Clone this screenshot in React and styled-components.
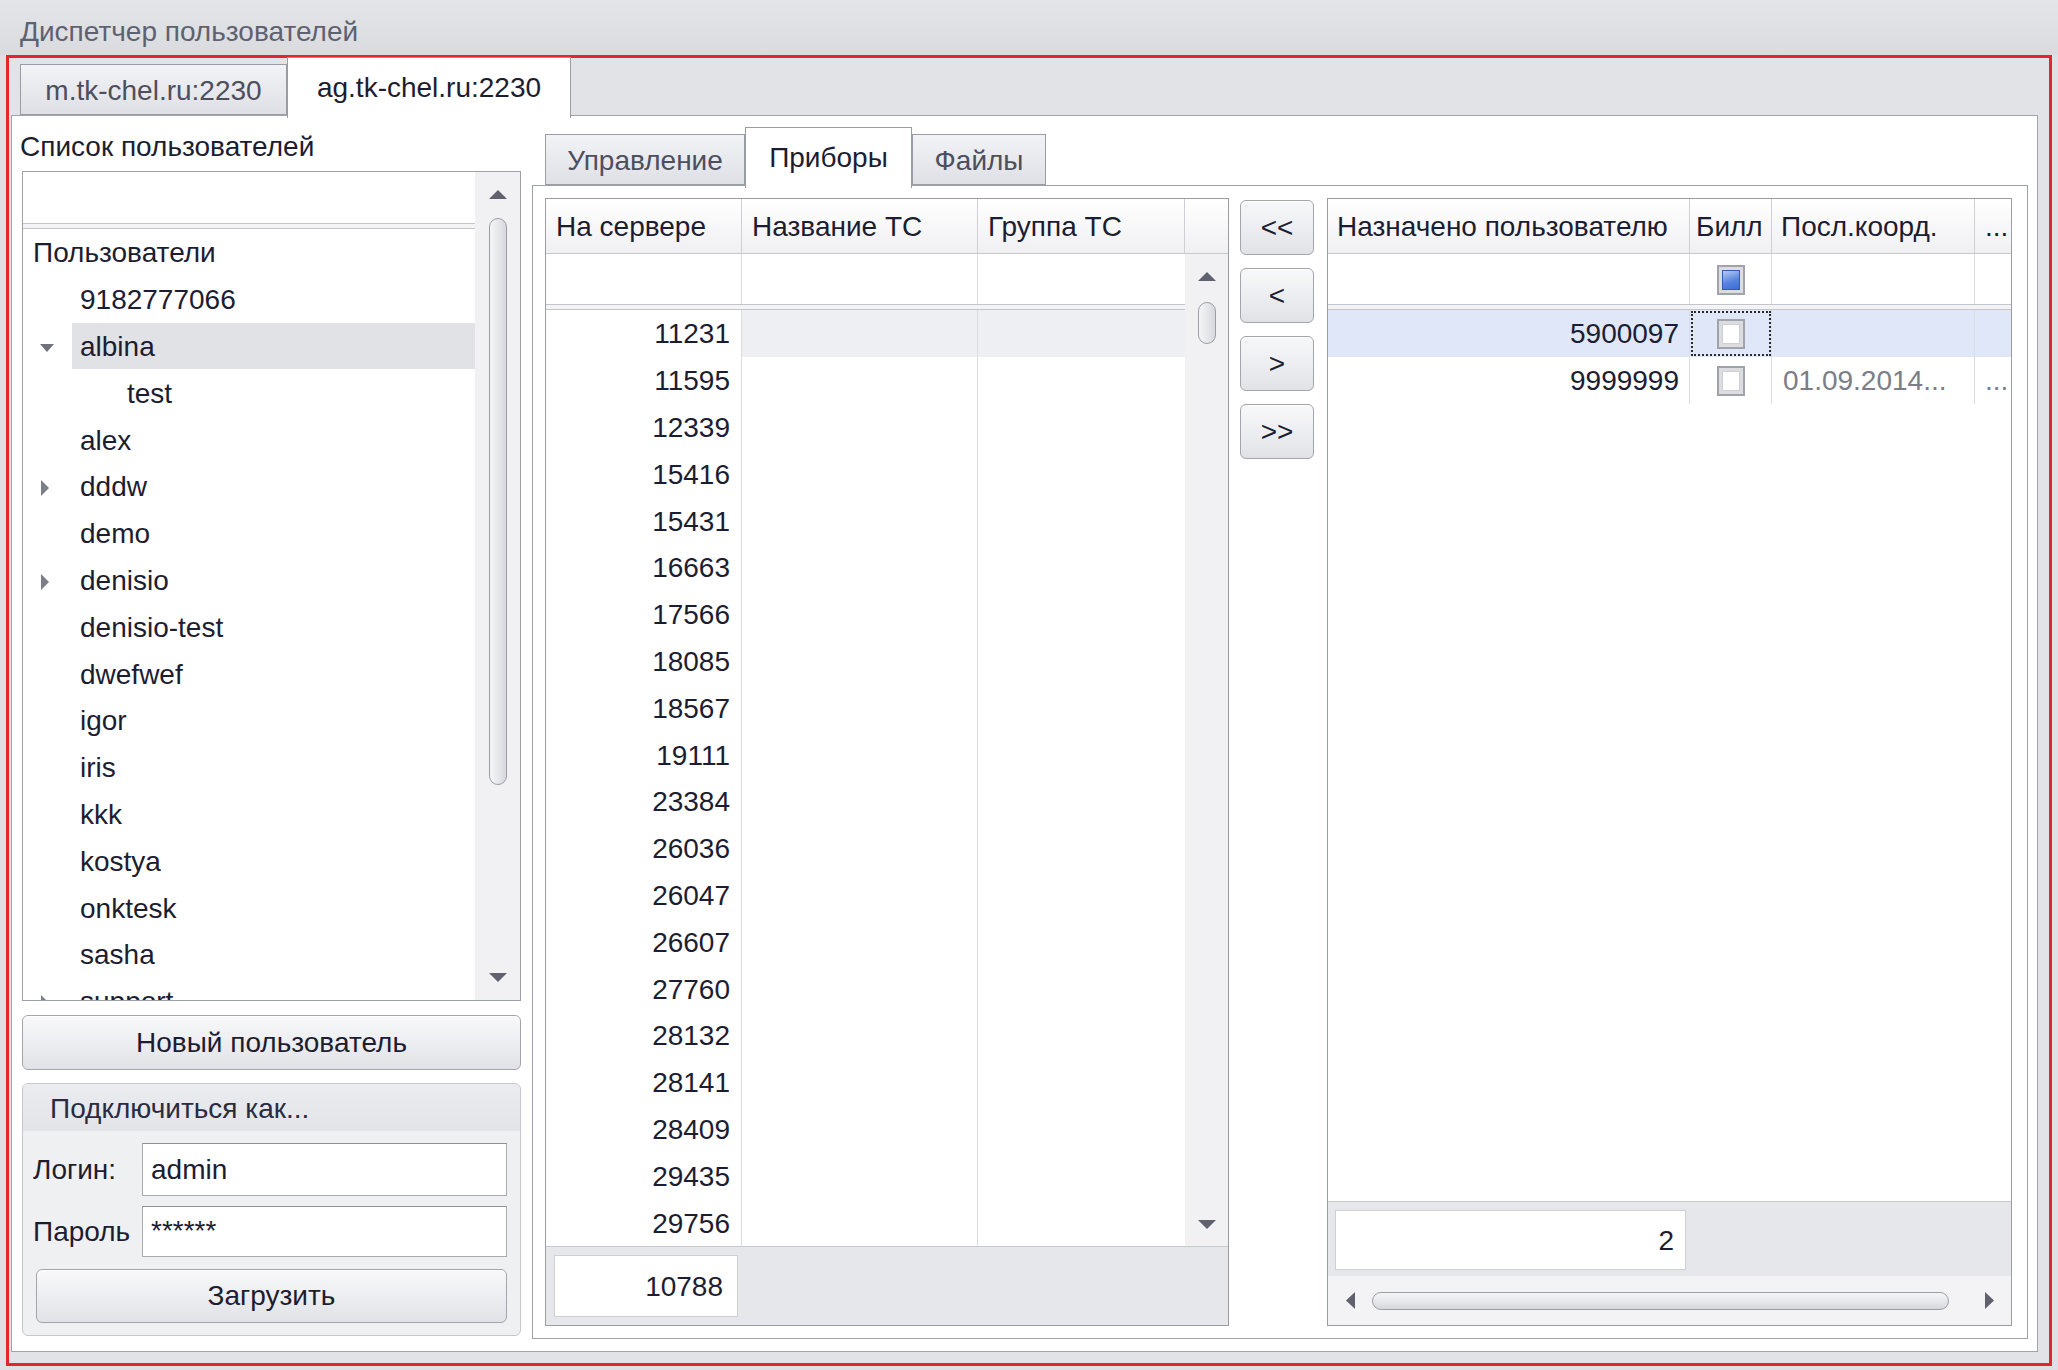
import React from 'react'
import styled, { createGlobalStyle } from 'styled-components'

const FONT = `"Liberation Sans", Arial, sans-serif`
const INK = '#1d1d31'
const ROW = 46.8

const GlobalStyle = createGlobalStyle`
  html, body { margin: 0; padding: 0; }
  body { background: #dfe0e4; font-family: ${FONT}; font-size: 28px; color: ${INK}; }
  * { box-sizing: border-box; }
`

const Window = styled.div`
  width: 2058px;
  height: 1370px;
  display: flex;
  flex-direction: column;
  background: #dfe0e4;
  overflow: hidden;
`

const TitleBar = styled.div`
  height: 55px;
  flex: none;
  display: flex;
  align-items: center;
  padding: 8px 0 0 20px;
  color: #5e6170;
  background: linear-gradient(#e4e5e8, #dadbdf);
`

const Frame = styled.div`
  flex: 1;
  min-height: 0;
  margin: 0 6px 4px 6px;
  border: 3px solid #e3262b;
  display: flex;
  flex-direction: column;
  background: #e2e3e7;
`

const TabStrip = styled.div`
  flex: none;
  height: ${p => p.$h}px;
  display: flex;
  align-items: flex-end;
  padding-left: ${p => p.$pad}px;
  position: relative;
  z-index: 1;
`

const Tab = styled.div`
  width: ${p => p.$w}px;
  height: ${p => (p.$active ? p.$h + 10 : p.$h)}px;
  margin-bottom: ${p => (p.$active ? -3 : 0)}px;
  display: flex;
  align-items: center;
  justify-content: center;
  padding-top: ${p => (p.$active ? 0 : 3)}px;
  border: 1px solid #9a9ca5;
  border-bottom: ${p => (p.$active ? 'none' : '1px solid #9a9ca5')};
  background: ${p => (p.$active ? '#ffffff' : 'linear-gradient(#f2f3f6, #dfe0e5)')};
  color: ${p => (p.$active ? INK : '#4d4f5e')};
  white-space: nowrap;
`

const OuterPanel = styled.div`
  flex: 1;
  min-height: 0;
  margin: 0 11px 11px 2px;
  border: 1px solid #a2a4ab;
  background: #fff;
  display: flex;
  gap: 11px;
  padding: 11px 9px 12px 10px;
`

const LeftColumn = styled.div`
  width: 499px;
  flex: none;
  display: flex;
  flex-direction: column;
`

const Caption = styled.div`
  height: 44px;
  line-height: 40px;
  margin-left: -2px;
  white-space: nowrap;
`

/* ---------- tree ---------- */

const TreeBox = styled.div`
  height: 830px;
  flex: none;
  border: 1px solid #9fa1a8;
  display: flex;
  overflow: hidden;
`

const TreeMain = styled.div`
  flex: 1;
  min-width: 0;
  display: flex;
  flex-direction: column;
  overflow: hidden;
`

const BlankHead = styled.div`
  height: ${p => p.$h}px;
  flex: none;
  background: #fff;
`

const DoubleLine = styled.div`
  height: 6px;
  flex: none;
  border-top: 1px solid #c3c5cb;
  border-bottom: 1px solid #c3c5cb;
  background: #f4f4f6;
`

const TreeRow = styled.div`
  height: ${ROW}px;
  flex: none;
  display: flex;
  align-items: center;
  padding-left: 10px;
`

const Indent = styled.div`
  width: ${p => p.$w}px;
  flex: none;
  height: 100%;
  display: flex;
  align-items: center;
  padding: 4px 0 0 7px;
`

const TreeLabel = styled.div`
  flex: 1;
  height: 100%;
  display: flex;
  align-items: center;
  padding: 2px 0 0 8px;
  margin-left: -8px;
  white-space: nowrap;
  background: ${p => (p.$selected ? '#e1e2e5' : 'transparent')};
`

/* ---------- scrollbars ---------- */

const VScroll = styled.div`
  width: ${p => p.$w}px;
  flex: none;
  display: flex;
  flex-direction: column;
  align-items: center;
  background: #f1f1f4;
`

const ArrowBox = styled.div`
  height: ${p => p.$h}px;
  width: ${p => p.$w || 'auto'};
  flex: none;
  display: flex;
  align-items: center;
  justify-content: center;
`

const VThumb = styled.div`
  width: 18px;
  height: ${p => p.$h}px;
  margin-top: ${p => p.$top}px;
  flex: none;
  border: 1px solid #9c9ea6;
  border-radius: 9px;
  background: linear-gradient(90deg, #f6f6f8, #e4e5e9 60%, #d6d7dc);
`

const Spacer = styled.div`
  flex: 1;
`

const HScroll = styled.div`
  height: 49px;
  flex: none;
  display: flex;
  align-items: center;
  background: #f3f3f5;
`

const HThumb = styled.div`
  width: ${p => p.$w}px;
  height: 18px;
  flex: none;
  border: 1px solid #9c9ea6;
  border-radius: 9px;
  background: linear-gradient(#f6f6f8, #e4e5e9 60%, #d6d7dc);
`

const Tri = ({ dir, color = '#5f616e' }) => {
  const vertical = dir === 'up' || dir === 'down'
  const w = vertical ? 18 : 9
  const h = vertical ? 9 : 17
  const pts = {
    up: '0,9 9,0 18,9',
    down: '0,0 18,0 9,9',
    left: '9,0 9,17 0,8.5',
    right: '0,0 0,17 9,8.5',
  }[dir]
  return (
    <svg width={w} height={h} viewBox={`0 0 ${w} ${h}`}>
      <polygon points={pts} fill={color} />
    </svg>
  )
}

const Expander = ({ open }) =>
  open ? (
    <svg width="14" height="10" viewBox="0 0 14 10">
      <polygon points="0,1 14,1 7,9" fill="#6f717c" />
    </svg>
  ) : (
    <svg width="10" height="16" viewBox="0 0 10 16">
      <polygon points="1,0 1,16 9,8" fill="#7c7e88" />
    </svg>
  )

/* ---------- buttons & form ---------- */

const Button = styled.div`
  height: ${p => p.$h || 55}px;
  margin-top: ${p => p.$mt || 0}px;
  margin-left: ${p => p.$ml || 0}px;
  flex: none;
  display: flex;
  align-items: center;
  justify-content: center;
  border: 1px solid #a3a5ac;
  border-radius: 6px;
  background: linear-gradient(#f8f8fa 0%, #eeeff2 45%, #e1e2e6 100%);
  box-shadow: inset 0 1px 0 #ffffff;
  white-space: nowrap;
`

const Group = styled.div`
  margin-top: 13px;
  height: 253px;
  flex: none;
  border: 1px solid #c6c7cd;
  border-radius: 6px;
  background: #eff0f2;
  display: flex;
  flex-direction: column;
  overflow: hidden;
`

const GroupHead = styled.div`
  height: 47px;
  flex: none;
  display: flex;
  align-items: center;
  padding: 3px 0 0 27px;
  background: linear-gradient(#ebecef, #e3e4e8);
  color: #2a2b40;
`

const GroupBody = styled.div`
  flex: 1;
  display: flex;
  flex-direction: column;
  padding: 12px 13px 12px 10px;
`

const FieldRow = styled.div`
  display: grid;
  grid-template-columns: 109px 1fr;
  align-items: center;
  margin-bottom: ${p => p.$mb}px;
`

const Input = styled.div`
  height: ${p => p.$h}px;
  border: 1px solid #a9abb2;
  border-top-color: #8f9199;
  background: #fff;
  display: flex;
  align-items: ${p => (p.$top ? 'flex-start' : 'center')};
  padding: ${p => (p.$top ? '8px' : '0')} 0 0 8px;
  white-space: nowrap;
`

/* ---------- inner tabs & grids ---------- */

const TabControl = styled.div`
  flex: 1;
  min-width: 0;
  display: flex;
  flex-direction: column;
`

const InnerPanel = styled.div`
  flex: 1;
  min-height: 0;
  border: 1px solid #9fa1a8;
  background: #fff;
  display: flex;
  padding: 12px 15px 12px 12px;
`

const Grid = styled.div`
  width: ${p => p.$w}px;
  flex: none;
  border: 1px solid #9b9da5;
  background: #fff;
  display: flex;
  flex-direction: column;
  overflow: hidden;
`

const HeaderRow = styled.div`
  height: 55px;
  flex: none;
  display: grid;
  grid-template-columns: ${p => p.$cols};
  border-bottom: 1px solid #c8c9ce;
  background: linear-gradient(#ffffff, #f0f0f3);
`

const HeaderCell = styled.div`
  display: flex;
  align-items: center;
  padding: 2px 0 0 ${p => p.$pl || 10}px;
  border-right: ${p => (p.$last ? 'none' : '1px solid #cfd0d5')};
  white-space: nowrap;
  overflow: hidden;
`

const GridBody = styled.div`
  flex: 1;
  min-height: 0;
  display: flex;
`

const DataArea = styled.div`
  flex: 1;
  min-width: 0;
  display: flex;
  flex-direction: column;
  overflow: hidden;
`

const DataRow = styled.div`
  height: ${p => p.$h || ROW}px;
  flex: none;
  display: grid;
  grid-template-columns: ${p => p.$cols};
  background: ${p => p.$bg || 'transparent'};
`

const Cell = styled.div`
  display: flex;
  align-items: center;
  justify-content: ${p => (p.$align === 'right' ? 'flex-end' : p.$align === 'center' ? 'center' : 'flex-start')};
  padding: 2px ${p => p.$pr || 0}px 0 ${p => p.$pl || 0}px;
  border-right: ${p => (p.$last ? 'none' : '1px solid #dcdde1')};
  background: ${p => p.$bg || 'transparent'};
  color: ${p => (p.$muted ? '#7c7d86' : INK)};
  outline: ${p => (p.$focus ? '2px dotted #2b2b2b' : 'none')};
  outline-offset: -3px;
  white-space: nowrap;
  overflow: hidden;
`

const Footer = styled.div`
  height: ${p => p.$h}px;
  flex: none;
  border-top: 1px solid #c8c9ce;
  background: #e6e7eb;
  padding: 8px 0 0 ${p => p.$pl}px;
`

const SummaryBox = styled.div`
  width: ${p => p.$w}px;
  height: ${p => p.$h}px;
  border: 1px solid #cfd0d5;
  background: #fff;
  display: flex;
  align-items: center;
  justify-content: flex-end;
  padding: 2px ${p => p.$pr}px 0 0;
`

const MoveColumn = styled.div`
  width: 74px;
  flex: none;
  margin: 0 13px 0 11px;
  padding-top: 2px;
  display: flex;
  flex-direction: column;
  gap: 13px;
`

const CheckBox = styled.div`
  width: 28px;
  height: 30px;
  border: 2px solid #a1a3aa;
  background: #dcdde1;
  padding: 3px;
  display: flex;

  &::after {
    content: '';
    flex: 1;
    border: 1px solid ${p => (p.$mixed ? '#3559b4' : '#cfd0d5')};
    background: ${p => (p.$mixed ? 'linear-gradient(160deg, #b6cbf5, #5a86e0 55%, #3d6bd2)' : '#ffffff')};
  }
`

/* ---------- data ---------- */

const users = [
  { name: 'Пользователи', level: 0 },
  { name: '9182777066', level: 1 },
  { name: 'albina', level: 1, exp: 'open', selected: true },
  { name: 'test', level: 2 },
  { name: 'alex', level: 1 },
  { name: 'dddw', level: 1, exp: 'closed' },
  { name: 'demo', level: 1 },
  { name: 'denisio', level: 1, exp: 'closed' },
  { name: 'denisio-test', level: 1 },
  { name: 'dwefwef', level: 1 },
  { name: 'igor', level: 1 },
  { name: 'iris', level: 1 },
  { name: 'kkk', level: 1 },
  { name: 'kostya', level: 1 },
  { name: 'onktesk', level: 1 },
  { name: 'sasha', level: 1 },
  { name: 'support', level: 1, exp: 'closed' },
]

const devices = [
  '11231', '11595', '12339', '15416', '15431', '16663', '17566', '18085', '18567', '19111',
  '23384', '26036', '26047', '26607', '27760', '28132', '28141', '28409', '29435', '29756',
]

const G1_HEAD = '196px 236px 207px 1fr'
const G1_DATA = '196px 236px 1fr'
const G2_COLS = '362px 82px 203px 1fr'

const UserTree = () => (
  <TreeBox>
    <TreeMain>
      <BlankHead $h={51} />
      <DoubleLine />
      {users.map(u => (
        <TreeRow key={u.name}>
          {u.level >= 2 && <Indent $w={47} />}
          {u.level >= 1 && (
            <Indent $w={47}>{u.exp && <Expander open={u.exp === 'open'} />}</Indent>
          )}
          <TreeLabel $selected={u.selected}>{u.name}</TreeLabel>
        </TreeRow>
      ))}
    </TreeMain>
    <VScroll $w={45}>
      <ArrowBox $h={45}><Tri dir="up" /></ArrowBox>
      <VThumb $top={1} $h={567} />
      <Spacer />
      <ArrowBox $h={45}><Tri dir="down" /></ArrowBox>
    </VScroll>
  </TreeBox>
)

const ConnectGroup = () => (
  <Group>
    <GroupHead>Подключиться как...</GroupHead>
    <GroupBody>
      <FieldRow $mb={10}>
        <span>Логин:</span>
        <Input $h={53}>admin</Input>
      </FieldRow>
      <FieldRow $mb={12}>
        <span>Пароль</span>
        <Input $h={51} $top>******</Input>
      </FieldRow>
      <Button $h={54} $ml={3}>Загрузить</Button>
    </GroupBody>
  </Group>
)

const ServerGrid = () => (
  <Grid $w={684}>
    <HeaderRow $cols={G1_HEAD}>
      <HeaderCell>На сервере</HeaderCell>
      <HeaderCell>Название ТС</HeaderCell>
      <HeaderCell>Группа ТС</HeaderCell>
      <HeaderCell $last />
    </HeaderRow>
    <GridBody>
      <DataArea>
        <DataRow $cols={G1_DATA} $h={50}>
          <Cell />
          <Cell />
          <Cell $last />
        </DataRow>
        <DoubleLine />
        {devices.map((d, i) => (
          <DataRow key={d} $cols={G1_DATA}>
            <Cell $align="right" $pr={11}>{d}</Cell>
            <Cell $bg={i === 0 ? '#eeeff2' : undefined} />
            <Cell $last $bg={i === 0 ? '#eeeff2' : undefined} />
          </DataRow>
        ))}
      </DataArea>
      <VScroll $w={43}>
        <ArrowBox $h={44}><Tri dir="up" /></ArrowBox>
        <VThumb $top={4} $h={42} />
        <Spacer />
        <ArrowBox $h={44}><Tri dir="down" /></ArrowBox>
      </VScroll>
    </GridBody>
    <Footer $h={79} $pl={8}>
      <SummaryBox $w={184} $h={62} $pr={14}>10788</SummaryBox>
    </Footer>
  </Grid>
)

const AssignedGrid = () => (
  <Grid $w={685}>
    <HeaderRow $cols={G2_COLS}>
      <HeaderCell $pl={9}>Назначено пользователю</HeaderCell>
      <HeaderCell $pl={6}>Билл</HeaderCell>
      <HeaderCell $pl={9}>Посл.коорд.</HeaderCell>
      <HeaderCell $last $pl={10}>...</HeaderCell>
    </HeaderRow>
    <DataArea>
      <DataRow $cols={G2_COLS} $h={50}>
        <Cell />
        <Cell $align="center"><CheckBox $mixed /></Cell>
        <Cell />
        <Cell $last />
      </DataRow>
      <DoubleLine />
      <DataRow $cols={G2_COLS} $bg="#dfe7f9">
        <Cell $align="right" $pr={10}>5900097</Cell>
        <Cell $align="center" $focus><CheckBox /></Cell>
        <Cell />
        <Cell $last />
      </DataRow>
      <DataRow $cols={G2_COLS}>
        <Cell $align="right" $pr={10}>9999999</Cell>
        <Cell $align="center"><CheckBox /></Cell>
        <Cell $pl={11} $muted>01.09.2014...</Cell>
        <Cell $last $pl={10} $muted>...</Cell>
      </DataRow>
      <Spacer />
    </DataArea>
    <Footer $h={75} $pl={7}>
      <SummaryBox $w={351} $h={60} $pr={11}>2</SummaryBox>
    </Footer>
    <HScroll>
      <ArrowBox $h={49} $w="44px"><Tri dir="left" /></ArrowBox>
      <HThumb $w={577} />
      <Spacer />
      <ArrowBox $h={49} $w="44px"><Tri dir="right" /></ArrowBox>
    </HScroll>
  </Grid>
)

const App = () => (
  <>
    <GlobalStyle />
    <Window>
      <TitleBar>Диспетчер пользователей</TitleBar>
      <Frame>
        <TabStrip $h={57} $pad={11}>
          <Tab $w={267} $h={51}>m.tk-chel.ru:2230</Tab>
          <Tab $w={284} $h={51} $active>ag.tk-chel.ru:2230</Tab>
        </TabStrip>
        <OuterPanel>
          <LeftColumn>
            <Caption>Список пользователей</Caption>
            <UserTree />
            <Button $mt={14}>Новый пользователь</Button>
            <ConnectGroup />
          </LeftColumn>
          <TabControl>
            <TabStrip $h={58} $pad={13}>
              <Tab $w={200} $h={51}>Управление</Tab>
              <Tab $w={167} $h={51} $active>Приборы</Tab>
              <Tab $w={134} $h={51}>Файлы</Tab>
            </TabStrip>
            <InnerPanel>
              <ServerGrid />
              <MoveColumn>
                <Button>&lt;&lt;</Button>
                <Button>&lt;</Button>
                <Button>&gt;</Button>
                <Button>&gt;&gt;</Button>
              </MoveColumn>
              <AssignedGrid />
            </InnerPanel>
          </TabControl>
        </OuterPanel>
      </Frame>
    </Window>
  </>
)

export default App
